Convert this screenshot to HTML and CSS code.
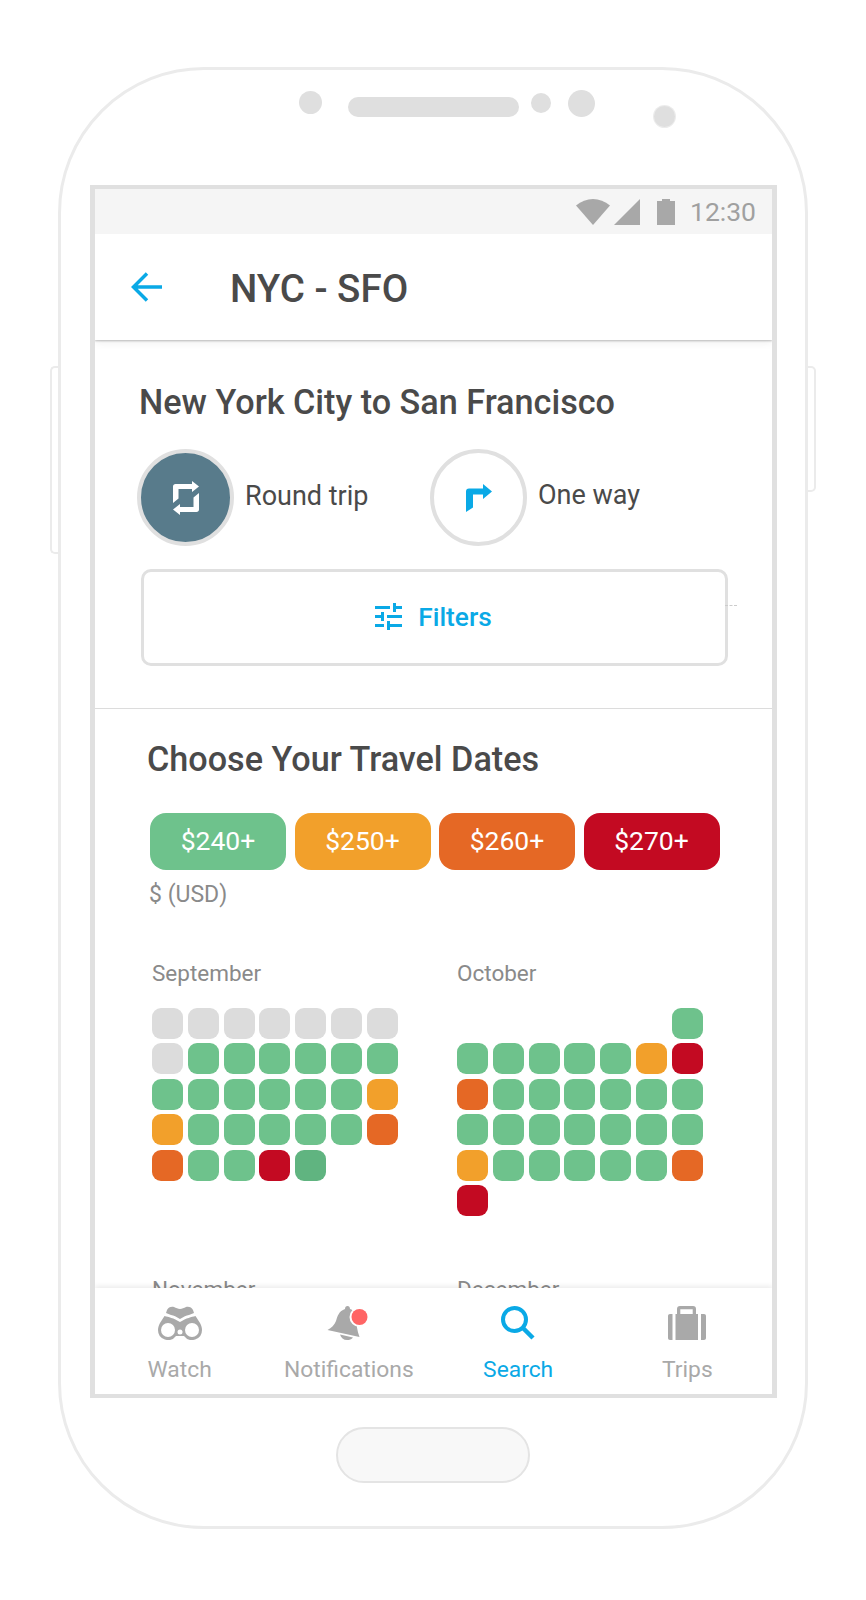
FILE: index.html
```html
<!DOCTYPE html>
<html lang="en">
<head>
  <meta charset="UTF-8">
  <meta name="viewport" content="width=device-width, initial-scale=1.0">
  <title>NYC - SFO</title>
  <link rel="stylesheet" href="styles.css">
</head>
<body>
  <div class="phone">
    <div class="side-btn side-left"></div>
    <div class="side-btn side-right"></div>

    <div class="hardware">
      <span class="dot dot-a"></span>
      <span class="speaker"></span>
      <span class="dot dot-b"></span>
      <span class="dot dot-c"></span>
      <span class="dot dot-d"></span>
    </div>

    <div class="screen">
      <div class="status-bar">
        <svg class="st-wifi" width="34" height="26" viewBox="0 0 34 26"><path d="M0 6.500C5 2.200 11 0 17 0s12 2.200 17 6.500L17 26z"/></svg>
        <svg class="st-signal" width="26" height="26" viewBox="0 0 26 26"><path d="M26 0v26H0z"/></svg>
        <svg class="st-battery" width="18" height="26" viewBox="0 0 18 26"><path d="M0 2h5V0h8v2h5v24H0z"/></svg>
        <span class="time">12:30</span>
      </div>

      <div class="app-bar">
        <svg class="back" width="32" height="30" viewBox="0 0 32 30"><path d="M31 15H3M16 1.500L2.500 15 16 28.500" fill="none" stroke="#0aa9e6" stroke-width="3.500"/></svg>
        <h1 class="app-title">NYC - SFO</h1>
      </div>

      <div class="content">
        <section class="trip">
          <h2 class="trip-title">New York City to San Francisco</h2>
          <div class="trip-types">
            <div class="trip-type type-round">
              <span class="circle circle-on">
                <svg width="26" height="34" viewBox="0 0 26 34"><path fill="#fff" d="M19 0l7 5.500-7 5.500V8H5.500v9.500L0 22V5.500C0 4 1 3 2.500 3H19zM7 34l-7-5.500L7 23v3h13.500v-9.500L26 12v16.500c0 1.500-1 2.500-2.500 2.500H7z"/></svg>
              </span>
              <span class="type-label">Round trip</span>
            </div>
            <div class="trip-type type-oneway">
              <span class="circle">
                <svg width="26" height="28" viewBox="0 0 26 28"><path fill="#0aa9e6" d="M17 0l9 7.500-9 7.500v-4.500H7v13L0 28V7.500C0 5.500 1 4.500 3 4.500h14z"/></svg>
              </span>
              <span class="type-label">One way</span>
            </div>
          </div>
          <button class="filters">
            <svg width="27" height="27" viewBox="3 3 18 18"><path fill="#0aa9e6" d="M3 17v2h6v-2H3zM3 5v2h10V5H3zm10 16v-2h8v-2h-8v-2h-2v6h2zM7 9v2H3v2h4v2h2V9H7zm14 4v-2H11v2h10zm-6-4h2V7h4V5h-4V3h-2v6z"/></svg>
            <span>Filters</span>
          </button>
          <span class="stray-mark"></span>
        </section>

        <section class="dates">
          <h2 class="dates-title">Choose Your Travel Dates</h2>
          <div class="legend">
            <span class="legend-item green">$240+</span>
            <span class="legend-item amber">$250+</span>
            <span class="legend-item orange">$260+</span>
            <span class="legend-item red">$270+</span>
          </div>
          <p class="currency">$ (USD)</p>

          <div class="months">
            <div class="month">
              <p class="month-name">September</p>
              <div class="days" id="sep"></div>
            </div>
            <div class="month">
              <p class="month-name">October</p>
              <div class="days" id="oct"></div>
            </div>
            <div class="month">
              <p class="month-name">November</p>
            </div>
            <div class="month">
              <p class="month-name">December</p>
            </div>
          </div>
        </section>
      </div>

      <nav class="tabs">
        <div class="tab">
          <svg width="44" height="34" viewBox="0 0 44 34">
            <path fill="#a9a9a9" d="M9 4c1-3 5-4 7-3 2 .8 4 2 6 2s4-1.200 6-2c2-1 6 0 7 3l1 3-5 2c-3 .5-5 1.500-9 4-4-2.500-6-3.500-9-4L8 7z"/>
            <path fill="#a9a9a9" d="M6.500 10c4 1 9 2 15.500 6 6.500-4 11.500-5 15.500-6L42 17c1 2 2 4 2 7a10 10 0 0 1-18 6h-8a10 10 0 0 1-18-6c0-3 1-5 2-7z"/>
            <circle cx="10" cy="24" r="7" fill="#fff"/><circle cx="34" cy="24" r="7" fill="#fff"/><circle cx="22" cy="26" r="2.500" fill="#fff"/>
          </svg>
          <span>Watch</span>
        </div>
        <div class="tab">
          <svg width="44" height="34" viewBox="0 0 44 34">
            <path fill="#a9a9a9" d="M20.500 0c1.500 0 2.500 1 2.500 3 4 1 5.500 5 6 9 .5 6 1 13 3.500 19L.5 24c4-2 7-5 8.500-9 1.500-5 3-10 9-12 0-2 1-3 2.500-3z"/>
            <path fill="#a9a9a9" d="M13 28.500l13 3c-1.500 2-3.500 2.500-6 2.500-3.500 0-6-2-7-5.500z"/>
            <circle cx="32.500" cy="11" r="10" fill="#fff"/><circle cx="32.500" cy="11" r="8" fill="#ff6565"/>
          </svg>
          <span>Notifications</span>
        </div>
        <div class="tab tab-on">
          <svg width="44" height="34" viewBox="0 0 44 34"><circle cx="18.500" cy="13.500" r="11.500" fill="none" stroke="#0aa9e6" stroke-width="4"/><path d="M27 22l10 10" stroke="#0aa9e6" stroke-width="4.500" fill="none"/></svg>
          <span>Search</span>
        </div>
        <div class="tab">
          <svg width="44" height="34" viewBox="0 0 44 34"><path fill="#a9a9a9" d="M5 8h2.500v26H5c-1.200 0-2-.8-2-2V10c0-1.200.8-2 2-2zM39 8h-3v26h3c1.200 0 2-.8 2-2V10c0-1.200-.8-2-2-2zM10.500 8H12V3c0-2 1-3 3-3h13c2 0 3 1 3 3v5h2v26H10.500zM15.300 8h12.400V3.300H15.300z"/></svg>
          <span>Trips</span>
        </div>
      </nav>
    </div>

    <div class="home-btn"></div>
  </div>

  <script src="app.js"></script>
</body>
</html>
```

FILE: styles.css
```css
* {
  box-sizing: border-box;
}

html, body {
  margin: 0;
  height: 1600px;
  overflow: hidden;
}

body {
  font-family: Roboto, Arial, sans-serif;
  background-color: #fff;
  color: #4a4a4a;
}

.phone {
  position: relative;
  width: 750px;
  height: 1462px;
  margin: 67px 0 0 58px;
  padding-top: 18px;
  border: 3px solid #ebebeb;
  border-radius: 146px;
  background-color: #fff;
}

.side-btn {
  position: absolute;
  top: 296px;
  width: 8px;
  border: 2px solid #ebebeb;
}

.side-left {
  left: -11px;
  height: 188px;
  border-right: none;
  border-radius: 5px 0 0 5px;
}

.side-right {
  right: -11px;
  height: 126px;
  border-left: none;
  border-radius: 0 5px 5px 0;
}

/* speaker and cameras */
.hardware {
  display: flex;
  align-items: flex-start;
  height: 97px;
  padding-left: 238px;
}

.dot {
  flex: none;
  border-radius: 50%;
  background-color: #dfdfdf;
}

.dot-a {
  width: 23px;
  height: 23px;
  margin-top: 3px;
}

.speaker {
  width: 171px;
  height: 20px;
  margin: 9px 0 0 26px;
  border-radius: 10px;
  background-color: #dfdfdf;
}

.dot-b {
  width: 20px;
  height: 20px;
  margin: 5px 0 0 12px;
}

.dot-c {
  width: 27px;
  height: 27px;
  margin: 2px 0 0 17px;
}

.dot-d {
  width: 21px;
  height: 21px;
  margin: 18px 0 0 59px;
  box-shadow: 0 0 0 1px #ececec;
}

.screen {
  position: relative;
  display: flex;
  flex-direction: column;
  width: 687px;
  height: 1213px;
  margin-left: 29px;
  border: 5px solid #e0e0e0;
  border-bottom-width: 4px;
  border-top-width: 4px;
  overflow: hidden;
}

.status-bar {
  position: relative;
  z-index: 3;
  flex: none;
  display: flex;
  align-items: center;
  height: 45px;
  padding-right: 16px;
  background-color: #f5f5f5;
}

.status-bar svg {
  flex: none;
  fill: #a8a8a8;
  margin-top: 1px;
}

.st-wifi {
  margin-left: auto;
}

.st-signal {
  margin-left: 4px;
}

.st-battery {
  margin-left: 17px;
}

.time {
  margin-left: 15px;
  font-size: 26.500px;
  color: #a0a0a0;
}

.app-bar {
  position: relative;
  z-index: 2;
  flex: none;
  display: flex;
  align-items: center;
  height: 106px;
  padding-left: 36px;
  background-color: #fff;
  box-shadow: 0 1px 2px rgba(0, 0, 0, 0.25), 0 3px 8px rgba(0, 0, 0, 0.06);
}

.app-title {
  margin: 2px 0 0 67px;
  font-size: 38.500px;
  font-weight: 500;
  color: #4a4a4a;
}

.content {
  flex: 1;
  min-height: 0;
  overflow: hidden;
}

.trip {
  position: relative;
  height: 369px;
  padding: 42px 0 0 44px;
  border-bottom: 1px solid #dcdcdc;
}

.trip-title,
.dates-title {
  margin: 0;
  font-size: 34.200px;
  font-weight: 500;
  line-height: 40px;
  color: #4a4a4a;
}

.trip-types {
  display: flex;
  margin: 27px 0 0 -2px;
}

.trip-type {
  display: flex;
  align-items: center;
}

.type-round {
  width: 293px;
}

.circle {
  display: flex;
  align-items: center;
  justify-content: center;
  width: 97px;
  height: 97px;
  border: 4px solid #e0e0e0;
  border-radius: 50%;
  background-color: #fff;
}

.circle-on {
  background-color: #587b8b;
}

.type-label {
  margin-left: 11px;
  padding-bottom: 3px;
  font-size: 27px;
  color: #4a4a4a;
}

.type-oneway .type-label {
  padding-bottom: 5px;
}

.filters {
  display: flex;
  align-items: center;
  justify-content: center;
  gap: 16px;
  width: 587px;
  height: 97px;
  margin: 23px 0 0 2px;
  padding: 0 2px 2px 0;
  border: 3px solid #e0e0e0;
  border-radius: 10px;
  background-color: #fff;
  font-family: inherit;
  font-size: 26.300px;
  font-weight: 500;
  color: #0aa9e6;
}

.stray-mark {
  position: absolute;
  left: 630px;
  top: 265px;
  width: 12px;
  border-top: 1px dashed #ccc;
}

.dates {
  padding: 30px 0 0 52px;
}

.legend {
  display: flex;
  gap: 8.500px;
  margin: 34px 0 0 3px;
}

.legend-item {
  display: flex;
  align-items: center;
  justify-content: center;
  width: 136px;
  height: 57px;
  padding-bottom: 2px;
  border-radius: 16px;
  font-size: 26.500px;
  color: #fff;
}

.green { background-color: #6ec28c; }
.amber { background-color: #f2a02b; }
.orange { background-color: #e56825; }
.red { background-color: #c30a22; }
.grey { background-color: #dcdcdc; }
.dark-green { background-color: #60b480; }

.currency {
  margin: 10px 0 0 2px;
  font-size: 23px;
  line-height: 30px;
  color: #8a8a8a;
}

.months {
  display: grid;
  grid-template-columns: 305px 1fr;
  row-gap: 58px;
  margin: 48px 0 0 5px;
}

.month-name {
  margin: 0;
  font-size: 22.500px;
  line-height: 30px;
  color: #8a8a8a;
}

.days {
  display: grid;
  grid-template-columns: repeat(7, 31px);
  grid-auto-rows: 31px;
  column-gap: 4.800px;
  row-gap: 4.400px;
  margin-top: 20px;
}

.day {
  border-radius: 9px;
}

.tabs {
  position: absolute;
  left: 0;
  right: 0;
  bottom: 0;
  z-index: 2;
  display: grid;
  grid-template-columns: repeat(4, 1fr);
  height: 106px;
  background-color: #fff;
  box-shadow: 0 -2px 5px rgba(0, 0, 0, 0.08);
}

.tab {
  display: flex;
  flex-direction: column;
  align-items: center;
  padding-top: 18px;
  font-size: 22.800px;
  color: #a9a9a9;
}

.tab span {
  margin-top: 16px;
}

.tab-on {
  color: #0aa9e6;
}

.home-btn {
  width: 194px;
  height: 56px;
  margin: 29px 0 0 275px;
  border: 2px solid #e4e4e4;
  border-radius: 28px;
  background-color: #f8f8f8;
}
```

FILE: app.js
```js
// g green, a amber, o orange, r red, x grey, d dark green, _ blank
const classes = { g: 'green', a: 'amber', o: 'orange', r: 'red', x: 'grey', d: 'dark-green' };

const months = {
  sep: ['xxxxxxx', 'xgggggg', 'gggggga', 'agggggo', 'oggrd'],
  oct: ['______g', 'gggggar', 'ogggggg', 'ggggggg', 'agggggo', 'r']
};

Object.keys(months).forEach((id) => {
  const box = document.getElementById(id);
  months[id].join('').split('').forEach((c) => {
    const cell = document.createElement('span');
    cell.className = c === '_' ? 'day' : 'day ' + classes[c];
    box.appendChild(cell);
  });
});
```
